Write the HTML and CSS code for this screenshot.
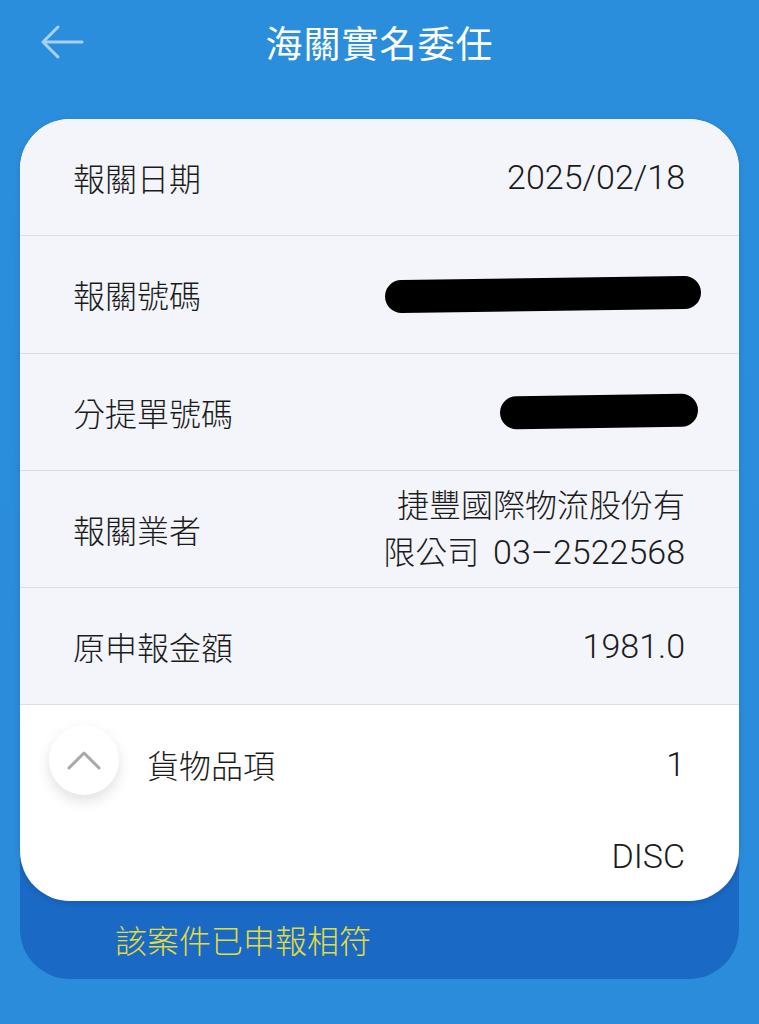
FILE: index.html
```html
<!DOCTYPE html>
<html lang="zh-Hant">

<head>
    <meta charset="UTF-8">
    <meta name="viewport" content="width=device-width, initial-scale=1.0">
    <title>海關實名委任</title>
    <link rel="stylesheet" href="styles.css">
</head>

<body>
    <header class="topbar">
        <button class="back" aria-label="返回">
            <svg width="44" height="36" viewBox="0 0 44 36">
                <path d="M42 18H3M18 3L3 18l15 15" fill="none" stroke="currentColor" stroke-width="3" stroke-linecap="round" stroke-linejoin="round" />
            </svg>
        </button>
        <h1>海關實名委任</h1>
    </header>

    <main class="panel">
        <section class="card">
            <div class="row">
                <span class="label">報關日期</span>
                <span class="value">2025/02/18</span>
            </div>
            <div class="row">
                <span class="label">報關號碼</span>
                <span class="redact redact-long"></span>
            </div>
            <div class="row">
                <span class="label">分提單號碼</span>
                <span class="redact redact-short"></span>
            </div>
            <div class="row">
                <span class="label">報關業者</span>
                <span class="value multi">捷豐國際物流股份有<br>限公司 <span class="num">03–2522568</span></span>
            </div>
            <div class="row">
                <span class="label">原申報金額</span>
                <span class="value">1981.0</span>
            </div>
            <div class="goods">
                <div class="goods-head">
                    <button class="toggle" aria-label="收合">
                        <svg width="34" height="20" viewBox="0 0 34 20">
                            <path d="M2 18L17 3l15 15" fill="none" stroke="currentColor" stroke-width="3" stroke-linecap="round" stroke-linejoin="round" />
                        </svg>
                    </button>
                    <span class="label">貨物品項</span>
                    <span class="value">1</span>
                </div>
                <div class="goods-item">
                    <span class="value">DISC</span>
                </div>
            </div>
        </section>
        <p class="status">該案件已申報相符</p>
    </main>
</body>

</html>
```

FILE: styles.css
```css
* {
    margin: 0;
    padding: 0;
    box-sizing: border-box;
}

body {
    background: linear-gradient(180deg, #2b8edc, #2a8cdb);
    min-height: 1024px;
    font-family: Roboto, "Noto Sans CJK TC", sans-serif;
    color: #1b1b1b;
}

button {
    border: none;
    background: none;
    cursor: pointer;
}

.topbar {
    height: 84px;
    display: flex;
    align-items: center;
    justify-content: center;
    position: relative;
    margin-bottom: 35px;
}

.topbar h1 {
    font-family: "Noto Sans CJK TC", sans-serif;
    font-size: 37px;
    font-weight: 400;
    color: #fff;
    letter-spacing: 1px;
}

.back {
    position: absolute;
    left: 40px;
    top: 24px;
    color: #a6d2f6;
    display: flex;
}

.panel {
    margin: 0 20px;
    background: #1a69c5;
    border-radius: 50px;
}

.card {
    background: #fff;
    border-radius: 50px;
    overflow: hidden;
    box-shadow: 0 2px 6px rgba(0, 0, 0, 0.12);
}

.row {
    height: 117.3px;
    display: flex;
    align-items: center;
    justify-content: space-between;
    padding: 0 54px 0 53px;
    background: #f3f5fa;
    border-bottom: 1px solid #dcdee4;
}

.label {
    font-family: "Noto Sans CJK TC", sans-serif;
    font-size: 32px;
    font-weight: 300;
}

.value {
    font-size: 34px;
    font-weight: 300;
    text-align: right;
}

.value.multi {
    font-size: 32px;
    line-height: 46px;
    word-spacing: 6px;
}

.value .num {
    font-size: 34px;
}

.redact {
    display: block;
    height: 33px;
    background: #000;
    border-radius: 17px;
    transform: rotate(-0.8deg);
}

.redact-long {
    width: 316px;
    margin-right: -16px;
}

.redact-short {
    width: 198px;
    margin-right: -13px;
}

.goods {
    padding-bottom: 12px;
}

.goods-head {
    height: 118px;
    display: flex;
    align-items: center;
    padding: 0 54px 0 29px;
}

.goods-head .label {
    flex: 1;
    margin-left: 28px;
}

.toggle {
    width: 70px;
    height: 70px;
    border-radius: 50%;
    background: #fff;
    box-shadow: 0 6px 14px rgba(0, 0, 0, 0.12);
    color: #a9a9a9;
    display: flex;
    align-items: center;
    justify-content: center;
    margin-top: -8px;
}

.goods-item {
    display: flex;
    justify-content: flex-end;
    align-items: center;
    height: 66px;
    padding: 0 54px;
}

.status {
    font-family: "Noto Sans CJK TC", sans-serif;
    font-size: 32px;
    font-weight: 300;
    color: #e4dc3c;
    padding: 18px 0 20px 95px;
    line-height: 40px;
}
```
